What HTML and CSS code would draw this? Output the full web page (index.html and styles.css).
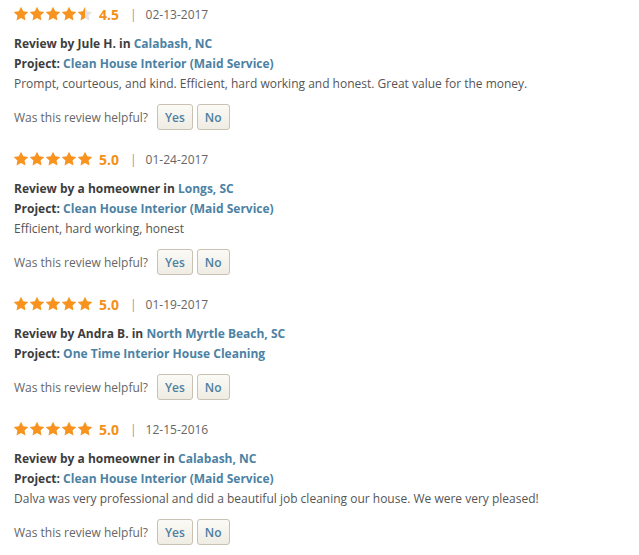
FILE: index.html
```html
<!DOCTYPE html>
<html>
<head>
<meta charset="utf-8">
<link rel="stylesheet" href="styles.css">
</head>
<body>
<svg width="0" height="0" class="defs">
  <defs>
    <symbol id="star" viewBox="0 0 24 24">
      <polygon points="12,1 15.29,7.97 22.94,8.95 17.33,14.23 18.76,21.8 12,18.1 5.24,21.8 6.67,14.23 1.06,8.95 8.71,7.97"/>
    </symbol>
    <linearGradient id="half" x1="0" x2="1" y1="0" y2="0">
      <stop offset="50%" stop-color="#f7931e"/>
      <stop offset="50%" stop-color="#e3e3e3"/>
    </linearGradient>
  </defs>
</svg>
<div class="reviews">

  <div class="review">
    <div class="head">
      <span class="stars">
        <svg class="star"><use href="#star"/></svg><svg class="star"><use href="#star"/></svg><svg class="star"><use href="#star"/></svg><svg class="star"><use href="#star"/></svg><svg class="star half"><use href="#star"/></svg>
      </span>
      <span class="score">4.5</span>
      <span class="sep">|</span>
      <span class="date">02-13-2017</span>
    </div>
    <div class="lines">
      <div class="line"><b>Review by Jule H. in</b> <a>Calabash, NC</a></div>
      <div class="line"><b>Project:</b> <a>Clean House Interior (Maid Service)</a></div>
      <div class="line text">Prompt, courteous, and kind. Efficient, hard working and honest. Great value for the money.</div>
    </div>
    <div class="helpful"><span class="q">Was this review helpful?</span><button class="btn">Yes</button><button class="btn">No</button></div>
  </div>

  <div class="review">
    <div class="head">
      <span class="stars">
        <svg class="star"><use href="#star"/></svg><svg class="star"><use href="#star"/></svg><svg class="star"><use href="#star"/></svg><svg class="star"><use href="#star"/></svg><svg class="star"><use href="#star"/></svg>
      </span>
      <span class="score">5.0</span>
      <span class="sep">|</span>
      <span class="date">01-24-2017</span>
    </div>
    <div class="lines">
      <div class="line"><b>Review by a homeowner in</b> <a>Longs, SC</a></div>
      <div class="line"><b>Project:</b> <a>Clean House Interior (Maid Service)</a></div>
      <div class="line text">Efficient, hard working, honest</div>
    </div>
    <div class="helpful"><span class="q">Was this review helpful?</span><button class="btn">Yes</button><button class="btn">No</button></div>
  </div>

  <div class="review">
    <div class="head">
      <span class="stars">
        <svg class="star"><use href="#star"/></svg><svg class="star"><use href="#star"/></svg><svg class="star"><use href="#star"/></svg><svg class="star"><use href="#star"/></svg><svg class="star"><use href="#star"/></svg>
      </span>
      <span class="score">5.0</span>
      <span class="sep">|</span>
      <span class="date">01-19-2017</span>
    </div>
    <div class="lines">
      <div class="line"><b>Review by Andra B. in</b> <a>North Myrtle Beach, SC</a></div>
      <div class="line"><b>Project:</b> <a>One Time Interior House Cleaning</a></div>
    </div>
    <div class="helpful"><span class="q">Was this review helpful?</span><button class="btn">Yes</button><button class="btn">No</button></div>
  </div>

  <div class="review">
    <div class="head">
      <span class="stars">
        <svg class="star"><use href="#star"/></svg><svg class="star"><use href="#star"/></svg><svg class="star"><use href="#star"/></svg><svg class="star"><use href="#star"/></svg><svg class="star"><use href="#star"/></svg>
      </span>
      <span class="score">5.0</span>
      <span class="sep">|</span>
      <span class="date">12-15-2016</span>
    </div>
    <div class="lines">
      <div class="line"><b>Review by a homeowner in</b> <a>Calabash, NC</a></div>
      <div class="line"><b>Project:</b> <a>Clean House Interior (Maid Service)</a></div>
      <div class="line text">Dalva was very professional and did a beautiful job cleaning our house. We were very pleased!</div>
    </div>
    <div class="helpful"><span class="q">Was this review helpful?</span><button class="btn">Yes</button><button class="btn">No</button></div>
  </div>

</div>
</body>
</html>
```
FILE: styles.css
```css
html, body {
  margin: 0;
  padding: 0;
  background: #fff;
}
body {
  font-family: "Open Sans", "Liberation Sans", sans-serif;
  font-size: 12px;
  color: #555;
}
.defs {
  position: absolute;
  width: 0;
  height: 0;
}
.reviews {
  padding: 4px 14px 0 13px;
  display: flex;
  flex-direction: column;
  gap: 19px;
}
.review {
  display: flex;
  flex-direction: column;
}
.head {
  display: flex;
  align-items: center;
  height: 20px;
}
.stars {
  display: flex;
  fill: #f7931e;
}
.star {
  width: 16px;
  height: 16px;
  display: block;
}
.star.half {
  fill: url(#half);
}
.score {
  margin-left: 6px;
  font-size: 14px;
  font-weight: 700;
  color: #f39019;
}
.sep {
  margin-left: 11px;
  color: #999;
  font-size: 12px;
}
.date {
  margin-left: 9px;
  color: #666;
  font-size: 12px;
}
.lines {
  margin-top: 10px;
  padding-left: 1px;
}
.line {
  line-height: 20px;
  white-space: nowrap;
}
.line b {
  font-weight: 700;
  color: #3d3d3d;
}
.line a {
  font-weight: 700;
  color: #4c82a4;
}
.helpful {
  margin-top: 10px;
  padding-left: 1px;
  display: flex;
  align-items: center;
  height: 26px;
}
.q {
  color: #666;
  margin-right: 9px;
}
.btn {
  font-family: "Open Sans", "Liberation Sans", sans-serif;
  font-size: 12px;
  font-weight: 600;
  color: #4c7fa0;
  height: 26px;
  padding: 0 7px;
  margin: 0 4px 0 0;
  border: 1px solid #c9c1b2;
  border-radius: 3px;
  background: linear-gradient(#fbfaf6, #efece3);
}
```
